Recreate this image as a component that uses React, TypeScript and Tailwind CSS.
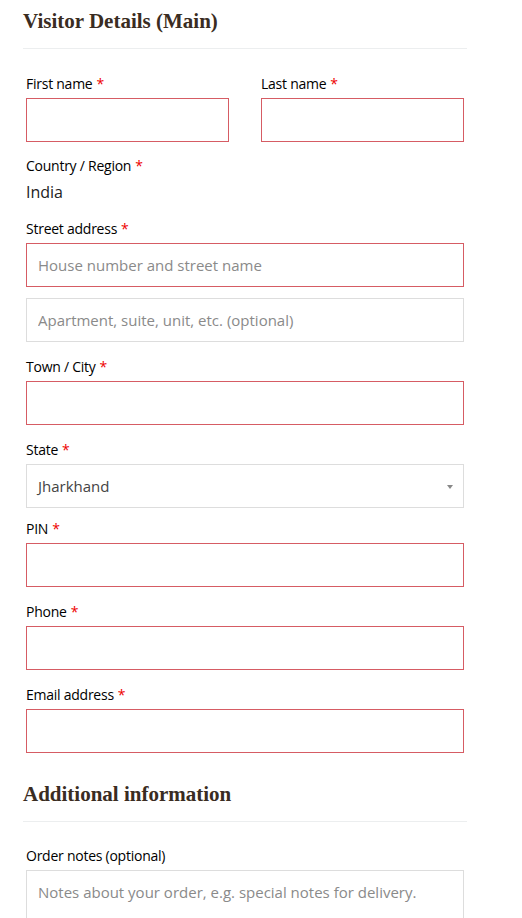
import React from "react";

const sans = { fontFamily: '"Open Sans", "Noto Sans", sans-serif' };
const serif = { fontFamily: '"Liberation Serif", "DejaVu Serif", serif' };

const Label = ({ text, required = true }: { text: string; required?: boolean }) => (
  <label className="block text-[14px] leading-5 tracking-[-0.25px] text-black mb-1">
    {text}
    {required && <span className="text-[#e00] ml-[4px]">*</span>}
  </label>
);

const Input = ({ placeholder, invalid = true }: { placeholder?: string; invalid?: boolean }) => (
  <input
    placeholder={placeholder}
    className={
      "block w-full h-[44px] px-[11px] text-[15px] text-[#333] placeholder:text-[#8a8a8a] bg-white outline-none border " +
      (invalid ? "border-[#d65c64]" : "border-[#ddd]")
    }
  />
);

const Field = ({ label, placeholder }: { label: string; placeholder?: string }) => (
  <div className="mb-[15px]">
    <Label text={label} />
    <Input placeholder={placeholder} />
  </div>
);

const Heading = ({ children }: { children: React.ReactNode }) => (
  <div className="border-b border-[#eceeef] pb-[14px]">
    <h3 style={serif} className="text-[21px] leading-[26px] font-bold text-[#3a2c22]">
      {children}
    </h3>
  </div>
);

export default function App() {
  return (
    <div style={sans} className="w-[522px] min-h-[918px] bg-white">
      <div className="w-[444px] ml-[23px] pt-[8px]">
        <Heading>Visitor Details (Main)</Heading>

        <div className="mx-[3px] mt-[25px]">
          <div className="flex gap-[32px] mb-[14px]">
            <div className="flex-1">
              <Label text="First name" />
              <Input />
            </div>
            <div className="flex-1">
              <Label text="Last name" />
              <Input />
            </div>
          </div>

          <div className="mb-[15px]">
            <Label text="Country / Region" />
            <div className="text-[16px] leading-6 text-[#222]">India</div>
          </div>

          <div className="mb-[15px]">
            <Label text="Street address" />
            <Input placeholder="House number and street name" />
            <div className="mt-[11px]">
              <Input placeholder="Apartment, suite, unit, etc. (optional)" invalid={false} />
            </div>
          </div>

          <Field label="Town / City" />

          <div className="mb-[11px]">
            <Label text="State" />
            <div className="relative h-[44px] border border-[#ddd] flex items-center px-[11px]">
              <span className="text-[15px] text-[#444]">Jharkhand</span>
              <span className="absolute right-[10px] top-[20px] w-0 h-0 border-l-[3px] border-r-[3px] border-t-[4px] border-l-transparent border-r-transparent border-t-[#888]" />
            </div>
          </div>

          <Field label="PIN" />
          <Field label="Phone" />
          <Field label="Email address" />
        </div>

        <div className="mt-[28px]">
          <Heading>Additional information</Heading>
        </div>

        <div className="mx-[3px] mt-[24px]">
          <label className="block text-[14px] leading-5 tracking-[-0.25px] text-black mb-1">Order notes (optional)</label>
          <textarea
            placeholder="Notes about your order, e.g. special notes for delivery."
            className="block w-full h-[100px] px-[11px] py-[9px] text-[15px] leading-6 placeholder:text-[#8a8a8a] border border-[#ddd] outline-none resize-none"
          />
        </div>
      </div>
    </div>
  );
}
